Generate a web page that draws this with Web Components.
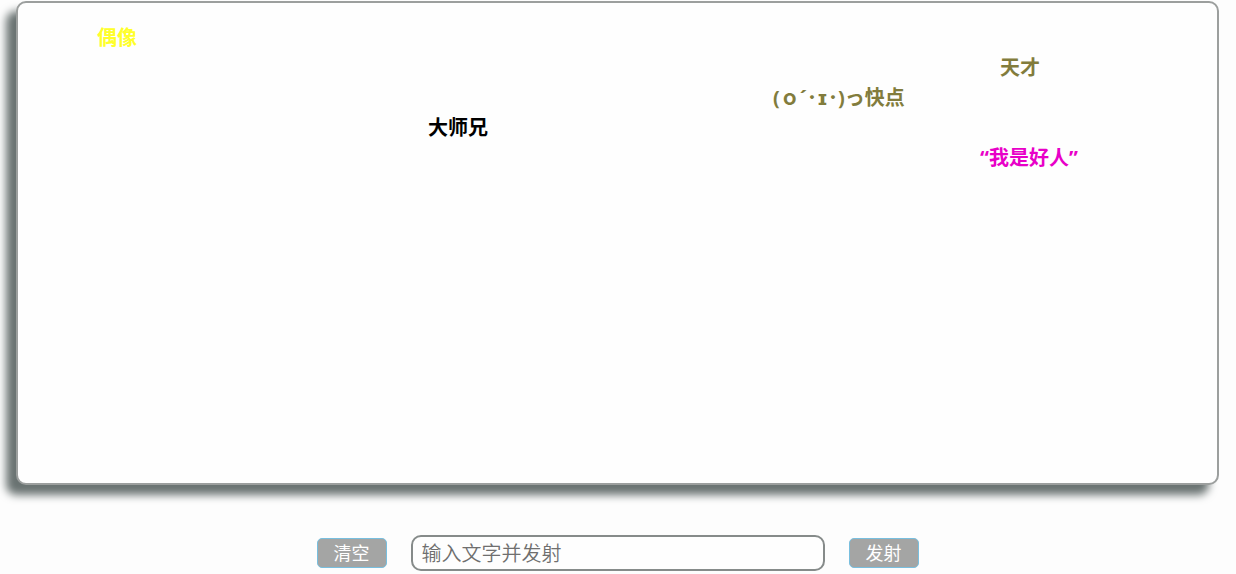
<!DOCTYPE html>
<html lang="zh-CN">
<head>
<meta charset="utf-8">
<meta name="viewport" content="width=device-width, initial-scale=1">
<title>弹幕</title>
<style>
  body { margin: 0; background: #fdfdfd; font-family: "Noto Sans", "Noto Sans CJK SC", sans-serif; }
</style>
</head>
<body>
<danmaku-app></danmaku-app>
<script>
class DanmakuItem extends HTMLElement {
  constructor() {
    super();
    this.attachShadow({ mode: "open" }).innerHTML = `
      <style>
        :host { display: block; position: absolute; white-space: nowrap;
          font-size: 20px; line-height: 30px; font-weight: 700; }
      </style><slot></slot>`;
  }
  connectedCallback() {
    /* each lane is 30px tall, the horizontal place is the flight position */
    this.style.top = 20 + Number(this.getAttribute("lane")) * 30 + "px";
    this.style.left = this.getAttribute("x") + "px";
    this.style.color = this.getAttribute("color");
  }
}
class DanmakuStage extends HTMLElement {
  constructor() {
    super();
    this.attachShadow({ mode: "open" }).innerHTML = `
      <style>
        :host { display: block; position: relative; box-sizing: border-box; height: 484px;
          border: 2px solid #9c9f9e; border-radius: 10px; background: #fefefe;
          box-shadow: -10px 10px 8px #6a7372; }
      </style><slot></slot>`;
  }
}
class DanmakuButton extends HTMLElement {
  constructor() {
    super();
    this.attachShadow({ mode: "open" }).innerHTML = `
      <style>
        :host { display: block; }
        button { display: block; box-sizing: border-box; width: 70px; height: 30px; padding: 0 0 2px;
          border: 1px solid #78bfdf; border-radius: 5px; background: #a4a5a4; color: #fff;
          font-family: "Noto Sans CJK SC", sans-serif; font-size: 18px; font-weight: 400; line-height: 26px; }
      </style><button type="button"><slot></slot></button>`;
  }
}
class DanmakuInput extends HTMLElement {
  constructor() {
    super();
    this.attachShadow({ mode: "open" }).innerHTML = `
      <style>
        :host { display: block; flex: 0 1 414px; }
        input { display: block; box-sizing: border-box; width: 100%; height: 36px; padding: 0 9px 2px;
          border: 2px solid #868b8a; border-radius: 10px; background: #fefefe; outline: 0;
          font-family: "Noto Sans CJK SC", sans-serif; font-size: 20px; font-weight: 350; }
        input::placeholder { color: #6f6f6f; opacity: 1; }
      </style><input type="text" placeholder="输入文字并发射" aria-label="输入文字并发射">`;
  }
}
class DanmakuApp extends HTMLElement {
  constructor() {
    super();
    this.attachShadow({ mode: "open" }).innerHTML = `
      <style>
        :host { display: block; padding: 1px 17px 3px 16px; }
        .face { font-family: "DejaVu Sans", "Noto Sans CJK SC", sans-serif; }
        form { display: flex; justify-content: center; align-items: center; gap: 24px; margin-top: 50px; }
      </style>
      <danmaku-stage>
        <danmaku-item lane="0" x="79" color="#ffff2a">偶像</danmaku-item>
        <danmaku-item lane="1" x="982" color="#827c3c">天才</danmaku-item>
        <danmaku-item lane="2" x="755" color="#827c3c">(ｏ´･<span class="face">ɪ</span>･)っ快点</danmaku-item>
        <danmaku-item lane="3" x="410" color="#000">大师兄</danmaku-item>
        <danmaku-item lane="4" x="962" color="#e800c8">“我是好人”</danmaku-item>
      </danmaku-stage>
      <form>
        <danmaku-button>清空</danmaku-button>
        <danmaku-input></danmaku-input>
        <danmaku-button>发射</danmaku-button>
      </form>`;
  }
}
customElements.define("danmaku-item", DanmakuItem);
customElements.define("danmaku-stage", DanmakuStage);
customElements.define("danmaku-button", DanmakuButton);
customElements.define("danmaku-input", DanmakuInput);
customElements.define("danmaku-app", DanmakuApp);
</script>
</body>
</html>
